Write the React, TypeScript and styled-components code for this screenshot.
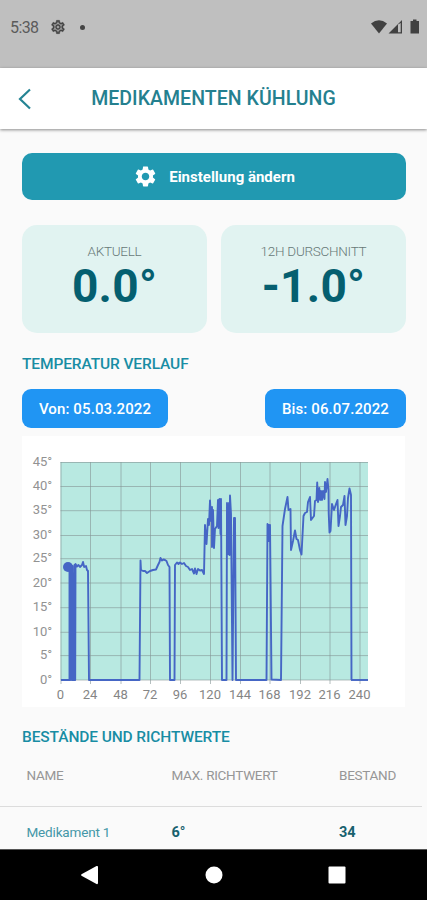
import React from 'react';
import styled, { createGlobalStyle } from 'styled-components';
import { MdOutlineSettings, MdSettings } from 'react-icons/md';

const GlobalStyle = createGlobalStyle`
  * { box-sizing: border-box; }
  body { margin: 0; background: #fafafa; font-family: Roboto, "Liberation Sans", sans-serif; }
`;

const Screen = styled.div`
  width: 427px;
  height: 900px;
  display: flex;
  flex-direction: column;
  overflow: hidden;
  background: #fafafa;
`;

const StatusBar = styled.div`
  flex: none;
  height: 68px;
  padding: 0 7px 14px 10px;
  display: flex;
  align-items: center;
  background: #bfbfbf;
  color: #444;
`;

const Clock = styled.span`
  width: 40px;
  padding-top: 2px;
  font-size: 16px;
  line-height: 20px;
  letter-spacing: -0.6px;
  color: #5b5b5b;
`;

const StatusGear = styled(MdOutlineSettings)`
  path:last-child {
    stroke: #444;
    stroke-width: 0.6px;
  }
`;

const Dot = styled.span`
  width: 5px;
  height: 5px;
  margin-left: 14px;
  border-radius: 50%;
  background: #444;
`;

const StatusIcons = styled.svg`
  margin-left: auto;
`;

const Header = styled.header`
  flex: none;
  height: 61px;
  display: flex;
  align-items: center;
  justify-content: center;
  padding: 0 18px;
  background: #fff;
  box-shadow: 0 1px 3px rgba(0, 0, 0, 0.45);
  z-index: 1;
`;

const BackIcon = styled.svg`
  flex: none;
`;

const Title = styled.h1`
  flex: 1;
  margin: 0 14px 0 0;
  padding-top: 1px;
  text-align: center;
  font-size: 19.5px;
  font-weight: 500;
  line-height: 24px;
  letter-spacing: 0.05px;
  color: #24808f;
`;

const Content = styled.main`
  flex: 1;
  min-height: 0;
  overflow: hidden;
  padding-top: 24px;
`;

const Section = styled.section`
  width: 384px;
  margin-left: 22px;
`;

const SettingsButton = styled.button`
  width: 100%;
  height: 47px;
  border: 0;
  border-radius: 10px;
  padding: 0;
  display: flex;
  align-items: center;
  justify-content: center;
  gap: 11px;
  background: #2199b1;
  color: #fff;
  font: 700 15px/20px Roboto, sans-serif;
`;

const Stats = styled.div`
  display: grid;
  grid-template-columns: 1fr 1fr;
  gap: 14px;
  margin-top: 25px;
`;

const StatCard = styled.div`
  height: 108px;
  padding-top: 17px;
  border-radius: 15px;
  background: #e1f3f1;
  text-align: center;
`;

const StatLabel = styled.div`
  font-size: 13.5px;
  font-weight: 300;
  line-height: 18px;
  letter-spacing: -0.28px;
  color: #687978;
`;

const StatValue = styled.div`
  font-size: 46px;
  font-weight: 700;
  line-height: 52px;
  letter-spacing: 0.3px;
  color: #055f70;
`;

const SectionTitle = styled.h2<{ $top: number }>`
  margin: ${(p) => p.$top}px 0 0;
  font-size: 15.5px;
  font-weight: 500;
  line-height: 20px;
  letter-spacing: -0.11px;
  color: #188da4;
`;

const DateRow = styled.div`
  display: flex;
  justify-content: space-between;
  margin-top: 15px;
`;

const DateButton = styled.button<{ $width: number }>`
  width: ${(p) => p.$width}px;
  height: 39px;
  padding: 1px 0 0;
  border: 0;
  border-radius: 9px;
  background: #2095f3;
  color: #fff;
  font: 500 15px/20px Roboto, sans-serif;
  letter-spacing: 0.12px;
`;

const ChartCard = styled.div`
  width: 383px;
  height: 271px;
  margin-top: 8px;
  background: #fff;
`;

const Chart = styled.svg`
  display: block;
  font-family: Roboto, sans-serif;
  font-size: 13px;
  fill: #858585;
`;

const DegreeLabel = styled.text`
  letter-spacing: -0.1px;
  fill: #929292;
`;

const Table = styled.div`
  width: 422px;
  margin-top: 11px;
`;

const Row = styled.div<{ $head?: boolean }>`
  display: grid;
  grid-template-columns: 145px 167.5px 1fr;
  align-items: center;
  height: ${(p) => (p.$head ? 49 : 51)}px;
  padding: ${(p) => (p.$head ? '0 0 15px 26.5px' : '0 0 0 26.5px')};
  border-bottom: 1px solid #dcdcdc;
`;

const HeadCell = styled.span`
  font-size: 13.5px;
  line-height: 18px;
  letter-spacing: -0.28px;
  color: #969696;
`;

const NameCell = styled.span`
  font-size: 13.5px;
  line-height: 18px;
  letter-spacing: -0.17px;
  color: #4497a8;
`;

const ValueCell = styled.span`
  padding-top: 1px;
  font-size: 14.5px;
  font-weight: 700;
  line-height: 18px;
  color: #17616e;
`;

const NavBar = styled.nav`
  flex: none;
  height: 51px;
  display: flex;
  justify-content: space-between;
  align-items: center;
  padding: 0 81px 1px 80px;
  background: #000;
  border-top: 1px solid #555;
`;

const Y_LINES = [462.5, 486.5, 510.7, 535.5, 558.7, 583, 607.7, 632.3, 655.6, 680];
const X_LINES = [61, 90.5, 121, 150.5, 180.5, 210.5, 240.5, 270, 300.5, 330, 360];

const READINGS = [
  '61,680 69.5,680 69.5,567 70.3,680 71,566 71.8,680 72.5,566 73.2,680 74,680 74.5,565 75.2,680 75.5,564 77,566.5 78.5,565 80,567 82,565 83,562 84.2,567 86,566 87,570 88,571 89,680',
  '139.5,680 140.5,560.5 141,570 143,571 145,571 147,573 150,571 153,570 156,569.5 158,565 159.5,562 160.5,558 162,560.5 163.5,559.5 165,560 166.5,561 168,565 169.5,567 170,680',
  '174.5,680 175,565 177,562.5 178.5,564 180,562.5 182,564 184,563 186,566 188,567 190,570 192,569 194,573.5 195,568.5 196.5,574 198,569 200,570.5 202,570 204,574 205,525 206.5,544 208,519 209,525 210,500.5 211,521 212,507 212,547 213,510 214,548 215,529 217,526 218,500 218.5,528 219.5,499 220.5,534 221,499 222,680',
  '226.5,680 227,503 228,554 229,503 229.5,555 230,495.5 231,514 232.5,680 234,518 235,518 236,680 236.5,680',
  '266.5,680 267.5,524 268,541 268.6,525 269.4,541 270,525 271.5,679.5',
  '281,680 282.5,526 285,509 287.5,497 288.5,510 290.5,509 291,550 293,541 295,530.5 296.5,539 298,540 300,550 301.5,554.5 303.5,516 305,513 307,512 308,502 310,497 311,520 314,516 315,501 316.5,500 317.2,482.5 318,502 319.3,488 320.2,500 321,491 322,500 323,491 324.5,499 325,482 326,492 327.5,479 328.5,490 328.7,513 329.5,532.5 330.5,531 332,504 334,510 336,504 337.5,500 338.5,526 340,516 341,507 343,505 344.5,496 345.5,525 347,516 348,498 349.5,488.5 351,495 351.5,680',
];

function TemperatureChart() {
  return (
    <Chart width="383" height="271" viewBox="22 436 383 271" role="img" aria-label="Temperatur Verlauf">
      <rect x="60.5" y="462" width="307.5" height="218" fill="#b8e9e1" />
      {Y_LINES.map((y, i) => (
        <g key={y}>
          <line x1="60.5" x2="368" y1={y} y2={y} stroke="#849494" strokeOpacity=".6" />
          <DegreeLabel x="52" y={y + 3.5} textAnchor="end">{45 - i * 5}°</DegreeLabel>
        </g>
      ))}
      {X_LINES.map((x, i) => (
        <g key={x}>
          <line x1={x} x2={x} y1="462" y2="684" stroke="#849494" strokeOpacity=".6" />
          <text x={x - 0.5} y="699" textAnchor="middle">{i * 24}</text>
        </g>
      ))}
      <polyline
        points={READINGS.join(' ')}
        fill="none"
        stroke="#4566c5"
        strokeWidth="1.9"
        strokeLinejoin="round"
      />
      <path d="M351 680H368" stroke="#4566c5" strokeWidth="1.9" />
      <circle cx="68" cy="567" r="5" fill="#4566c5" />
    </Chart>
  );
}

export default function App() {
  return (
    <Screen>
      <GlobalStyle />
      <StatusBar>
        <Clock>5:38</Clock>
        <StatusGear size={16} />
        <Dot />
        <StatusIcons width="49" height="16" viewBox="0 0 49 16" fill="#414141">
          <path d="M0 4.5Q8 -2 16 4.5L8 14.5Z" />
          <path d="M17.5 14.5L31 1V14.5ZM27 5.5V13.3H29.7V4Z" fillRule="evenodd" />
          <path d="M42 0.5h3.5v1.5H48v12.5h-8.5V2H42Z" />
        </StatusIcons>
      </StatusBar>
      <Header>
        <BackIcon width="14" height="22" viewBox="0 0 14 22" fill="none" stroke="#258494" strokeWidth="2.2">
          <path d="M12 1.5L2 11L12 20.5" />
        </BackIcon>
        <Title>MEDIKAMENTEN KÜHLUNG</Title>
      </Header>
      <Content>
        <Section>
          <SettingsButton>
            <MdSettings size={25} />
            Einstellung ändern
          </SettingsButton>
          <Stats>
            <StatCard>
              <StatLabel>AKTUELL</StatLabel>
              <StatValue>0.0°</StatValue>
            </StatCard>
            <StatCard>
              <StatLabel>12H DURSCHNITT</StatLabel>
              <StatValue>-1.0°</StatValue>
            </StatCard>
          </Stats>
          <SectionTitle $top={21}>TEMPERATUR VERLAUF</SectionTitle>
          <DateRow>
            <DateButton $width={146}>Von: 05.03.2022</DateButton>
            <DateButton $width={141}>Bis: 06.07.2022</DateButton>
          </DateRow>
          <ChartCard>
            <TemperatureChart />
          </ChartCard>
          <SectionTitle $top={20}>BESTÄNDE UND RICHTWERTE</SectionTitle>
        </Section>
        <Table>
          <Row $head>
            <HeadCell>NAME</HeadCell>
            <HeadCell>MAX. RICHTWERT</HeadCell>
            <HeadCell>BESTAND</HeadCell>
          </Row>
          <Row>
            <NameCell>Medikament 1</NameCell>
            <ValueCell>6°</ValueCell>
            <ValueCell>34</ValueCell>
          </Row>
        </Table>
      </Content>
      <NavBar>
        <svg width="19" height="20" viewBox="0 0 19 20" fill="#fff">
          <path d="M1.5 9.2L16.5 1Q18 .5 18 2V18Q18 19.5 16.5 19L1.5 10.8Q.5 10 1.5 9.2Z" />
        </svg>
        <svg width="18" height="18" viewBox="0 0 18 18" fill="#fff">
          <circle cx="9" cy="9" r="8.5" />
        </svg>
        <svg width="18" height="18" viewBox="0 0 18 18" fill="#fff">
          <rect x=".5" y=".5" width="17" height="17" rx="1" />
        </svg>
      </NavBar>
    </Screen>
  );
}
